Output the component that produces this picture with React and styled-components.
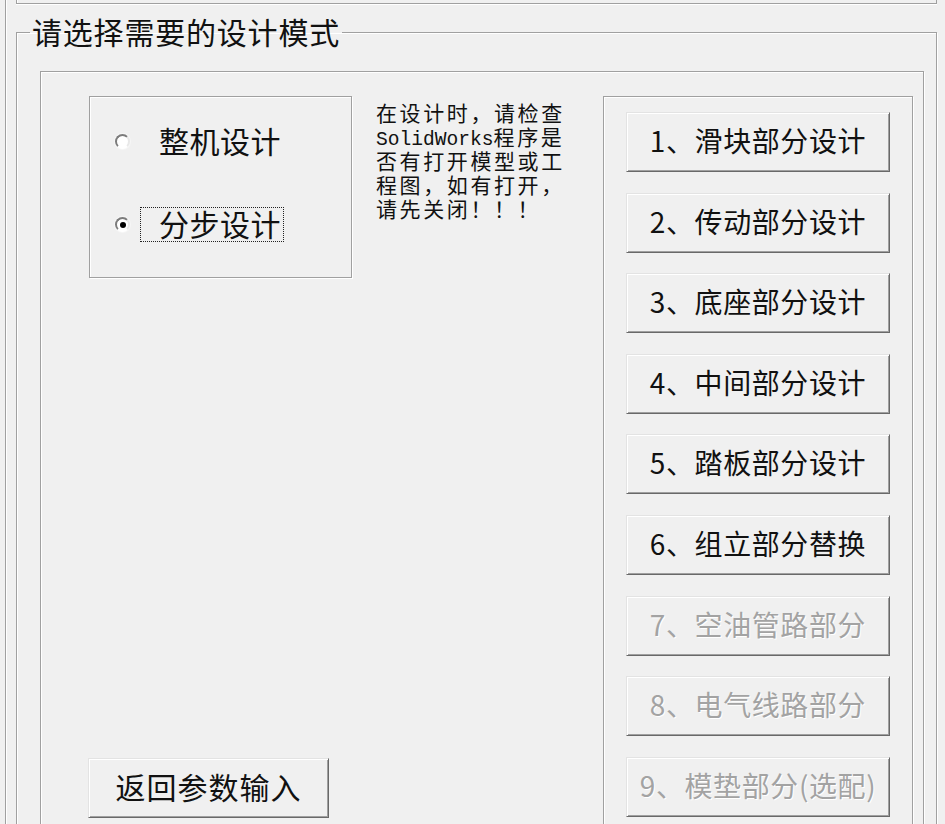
import React from "react";
import styled, { createGlobalStyle, css } from "styled-components";

const GlobalStyle = createGlobalStyle`
  html, body {
    margin: 0;
    padding: 0;
    background: #f0f0f0;
  }
  body {
    font-family: "Noto Sans CJK SC", "Noto Sans", sans-serif;
    color: #111;
  }
`;

const steps = [
  { label: "1、滑块部分设计" },
  { label: "2、传动部分设计" },
  { label: "3、底座部分设计" },
  { label: "4、中间部分设计" },
  { label: "5、踏板部分设计" },
  { label: "6、组立部分替换" },
  { label: "7、空油管路部分", disabled: true },
  { label: "8、电气线路部分", disabled: true },
  { label: "9、模垫部分(选配)", disabled: true },
];

function App() {
  return (
    <>
      <GlobalStyle />
      <Screen>
        <Frame>
          <TopBox />
          <Group>
            <Legend>请选择需要的设计模式</Legend>
            <InnerPanel>
              <LeftColumn>
                <RadioBox>
                  <RadioRow>
                    <RadioDot />
                    <RadioLabel>整机设计</RadioLabel>
                  </RadioRow>
                  <RadioRow>
                    <RadioDot checked />
                    <RadioLabel focused>分步设计</RadioLabel>
                  </RadioRow>
                </RadioBox>
                <BackButton>返回参数输入</BackButton>
              </LeftColumn>

              <Note>
                <NoteLine>在设计时，请检查</NoteLine>
                <NoteLine>
                  <Latin>SolidWorks</Latin>程序是
                </NoteLine>
                <NoteLine>否有打开模型或工</NoteLine>
                <NoteLine>程图，如有打开，</NoteLine>
                <NoteLine>请先关闭！！！</NoteLine>
              </Note>

              <StepPanel>
                {steps.map((s) => (
                  <StepButton key={s.label} disabled={s.disabled}>
                    {s.label}
                  </StepButton>
                ))}
              </StepPanel>
            </InnerPanel>
          </Group>
        </Frame>
      </Screen>
    </>
  );
}

const etched = css`
  border: 1px solid #a0a0a0;
  box-shadow: inset 1px 1px 0 #fff, 1px 1px 0 #fff;
`;

const Screen = styled.div`
  width: 945px;
  height: 824px;
  overflow: hidden;
  background: #f0f0f0;
`;

const Frame = styled.div`
  margin-left: 5px;
  height: 100%;
  border-left: 1px solid #a0a0a0;
  box-shadow: inset 1px 0 0 #fff;
`;

const TopBox = styled.div`
  box-sizing: border-box;
  margin-left: 10px;
  width: 921px;
  height: 4px;
  border: 1px solid #a0a0a0;
  border-top: none;
  box-shadow: inset 1px 0 0 #fff, 0 1px 0 #fff;
`;

const Group = styled.fieldset`
  box-sizing: border-box;
  margin: 11px 0 0 10px;
  padding: 0;
  width: 921px;
  min-width: 0;
  height: 900px;
  ${etched};
`;

const Legend = styled.legend`
  margin-left: 13px;
  padding: 0 2px 3px;
  font-size: 30px;
  line-height: 32px;
  letter-spacing: 0.8px;
  color: #111;
`;

const InnerPanel = styled.div`
  box-sizing: border-box;
  display: flex;
  align-items: flex-start;
  margin: 21px 0 0 23px;
  padding: 24px 10px 0 48px;
  width: 884px;
  height: 820px;
  ${etched};
`;

const LeftColumn = styled.div`
  display: flex;
  flex-direction: column;
  align-items: flex-start;
  width: 263px;
  flex-shrink: 0;
`;

const RadioBox = styled.div`
  box-sizing: border-box;
  width: 263px;
  height: 182px;
  padding: 27px 0 0 25px;
  display: flex;
  flex-direction: column;
  gap: 48px;
  ${etched};
`;

const RadioRow = styled.div`
  display: flex;
  align-items: center;
  height: 35px;
`;

const RadioDot = styled.span`
  position: relative;
  box-sizing: border-box;
  width: 15px;
  height: 15px;
  border-radius: 50%;
  background: #fff;
  border: 2px solid;
  border-color: #7c7c7c #e8e8e8 #ffffff #7c7c7c;
  box-shadow: 0 0 0 1px #f6f6f6;
  flex-shrink: 0;

  ${(p) =>
    p.checked &&
    css`
      &::after {
        content: "";
        position: absolute;
        left: 2.5px;
        top: 2.5px;
        width: 6px;
        height: 6px;
        border-radius: 50%;
        background: #000;
      }
    `}
`;

const RadioLabel = styled.span`
  box-sizing: border-box;
  margin-left: 10px;
  height: 35px;
  padding: 0 2px 4px 18px;
  display: flex;
  align-items: center;
  font-size: 30px;
  letter-spacing: 0.5px;
  color: #111;
  border: 1px dotted ${(p) => (p.focused ? "#222" : "transparent")};
`;

const buttonFace = css`
  box-sizing: border-box;
  display: flex;
  align-items: center;
  justify-content: center;
  background: #f0f0f0;
  border: 1px solid;
  border-color: #e3e3e3 #696969 #696969 #e3e3e3;
  box-shadow: inset 1px 1px 0 #fff, inset -1px -1px 0 #a0a0a0;
  font-family: "Noto Sans CJK SC", "Noto Sans", sans-serif;
  padding: 0 0 4px;
  cursor: default;
`;

const BackButton = styled.button`
  ${buttonFace};
  margin-top: 480px;
  margin-left: -1px;
  width: 241px;
  height: 60px;
  font-size: 30px;
  letter-spacing: 1px;
  color: #111;
`;

const Note = styled.div`
  margin: 4px 0 0 24px;
  font-size: 21px;
  line-height: 24px;
  letter-spacing: 2.6px;
  color: #111;
`;

const NoteLine = styled.div`
  white-space: nowrap;
  height: 24px;
`;

const Latin = styled.span`
  font-family: "Liberation Mono", monospace;
  font-size: 19.6px;
  letter-spacing: 0;
`;

const StepPanel = styled.div`
  box-sizing: border-box;
  margin-left: auto;
  width: 310px;
  height: 800px;
  padding: 15px 0 0 22px;
  display: flex;
  flex-direction: column;
  gap: 20.6px;
  ${etched};
`;

const StepButton = styled.button`
  ${buttonFace};
  width: 264px;
  height: 60px;
  flex-shrink: 0;
  font-size: 28px;
  letter-spacing: 0.6px;
  color: #111;

  &:disabled {
    color: #a3a3a3;
    text-shadow: 1px 1px 0 #fff;
  }
`;

export default App;
